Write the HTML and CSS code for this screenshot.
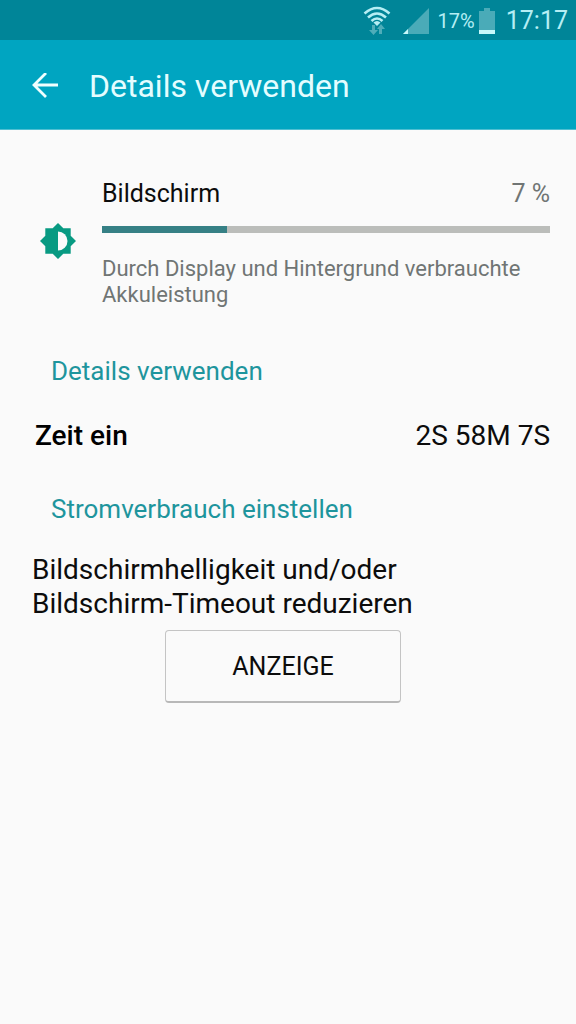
FILE: index.html
```html
<!DOCTYPE html>
<html lang="de">
<head>
  <meta charset="UTF-8" />
  <meta name="viewport" content="width=device-width, initial-scale=1.0" />
  <title>Details verwenden</title>
  <link rel="stylesheet" href="styles.css">
</head>
<body>
  <div class="status-bar">
    <svg class="wifi-icon" width="28" height="30" viewBox="0 0 28 30" aria-hidden="true">
      <g fill="none" stroke="#b5eef4" stroke-width="2.6">
        <path d="M1.5 7.5 Q14 -3.5 26.5 7.5" />
        <path d="M5 11.5 Q14 3.5 23 11.5" />
        <path d="M8.5 15 Q14 10 19.5 15" />
      </g>
      <path d="M10.5 16.5 Q14 13.5 17.5 16.5 L14 20 Z" fill="#b5eef4" />
      <path d="M9 19 h3 v5 h3 l-4.5 5 -4.500 -5 h3 Z M16 28 v-5 h-2 l4 -5 4 5 h-3 v5 Z" fill="#4fadb9" />
    </svg>
    <svg class="signal-icon" width="26" height="26" viewBox="0 0 26 26" aria-hidden="true">
      <path d="M26 0 V26 H0 Z" fill="#4aabb8" />
      <path d="M5 21 V26 H0 Z" fill="#c8f8fa" />
    </svg>
    <span class="battery-text">17%</span>
    <svg class="battery-icon" width="16" height="26" viewBox="0 0 16 26" aria-hidden="true">
      <path d="M5 0 H11 V3 H16 V26 H0 V3 H5 Z" fill="#4aabb8" />
      <path d="M0 22 H16 V26 H0 Z" fill="#c8f8fa" />
    </svg>
    <time class="clock">17:17</time>
  </div>

  <header>
    <button class="back-btn" type="button" aria-label="Zurück">
      <svg width="26" height="26" viewBox="0 0 26 26" aria-hidden="true">
        <path d="M26 12 H2 M14 0 L2 12 L14 24" fill="none" stroke="#f0ffff" stroke-width="2.8" />
      </svg>
    </button>
    <h1>Details verwenden</h1>
  </header>

  <main>
    <section class="usage">
      <svg class="usage-icon" width="36" height="36" viewBox="0 0 36 36" aria-hidden="true">
        <path d="M18 0 L23.300 5.300 H30.700 V12.700 L36 18 L30.700 23.300 V30.700 H23.300 L18 36 L12.700 30.700 H5.300 V23.300 L0 18 L5.300 12.700 V5.300 H12.700 Z" fill="#089a82" />
        <path d="M18 8.500 A9.500 9.500 0 0 1 18 27.500 Z" fill="#fafafa" />
      </svg>
      <div class="usage-body">
        <div class="usage-head">
          <span id="usageName">Bildschirm</span>
          <span class="percent">7 %</span>
        </div>
        <div class="bar" role="img" aria-labelledby="usageName">
          <div class="bar-fill" style="width: 28%"></div>
        </div>
        <p class="usage-text">Durch Display und Hintergrund verbrauchte Akkuleistung</p>
      </div>
    </section>

    <h2>Details verwenden</h2>
    <dl class="detail-row">
      <dt>Zeit ein</dt>
      <dd>2S 58M 7S</dd>
    </dl>

    <h2>Stromverbrauch einstellen</h2>
    <section class="adjust">
      <p>Bildschirmhelligkeit und/oder Bildschirm-Timeout reduzieren</p>
      <button class="display-btn" type="button">ANZEIGE</button>
    </section>
  </main>
</body>
</html>
```

FILE: styles.css
```css
/* Global Reset & Base Styles */
* { box-sizing: border-box; margin: 0; padding: 0; }
body {
  font-family: Roboto, "Liberation Sans", sans-serif;
  background: #fafafa;
  color: #0c0c0c;
  font-size: 25px;
  line-height: 32px;
}
button {
  font: inherit;
  color: inherit;
}
svg {
  display: block;
  flex: none;
}
/* Status bar */
.status-bar {
  display: flex;
  align-items: center;
  justify-content: flex-end;
  height: 40px;
  padding: 2px 8px 0;
  background: #008598;
  color: #b5eef4;
}
.wifi-icon {
  margin-right: 12px;
}
.signal-icon {
  margin-right: 9px;
}
.battery-text {
  font-size: 20px;
}
.battery-icon {
  margin: 0 11px 0 4px;
}
/* App bar */
header {
  display: flex;
  align-items: center;
  height: 90px;
  padding: 2px 32px 0;
  background: #00a5c1;
  border-bottom: 1px solid #4fbfd2;
}
.back-btn {
  margin-right: 31px;
  border: none;
  background: none;
  cursor: pointer;
}
header h1 {
  font-size: 32px;
  font-weight: normal;
  line-height: 40px;
  color: #e4fdff;
}
/* Usage summary */
.usage {
  display: flex;
  align-items: flex-start;
  gap: 26px;
  padding: 48px 26px 0 40px;
}
.usage-icon {
  margin-top: 45px;
}
.usage-body {
  flex: 1;
}
.usage-head {
  display: flex;
  justify-content: space-between;
}
.percent {
  color: #707574;
}
.bar {
  height: 7px;
  margin: 16px 0 23px;
  background: #bbbdba;
}
.bar-fill {
  height: 100%;
  background: #368085;
}
.usage-text {
  font-size: 22px;
  line-height: 26px;
  color: #707574;
}
/* Section headings */
h2 {
  padding: 0 51px;
  font-size: 26px;
  font-weight: normal;
  color: #1e959d;
}
.usage + h2 {
  margin-top: 47px;
}
.detail-row {
  display: flex;
  justify-content: space-between;
  margin: 33px 0 41px;
  padding: 0 26px 0 35px;
  font-size: 28px;
}
.detail-row dt {
  font-weight: 500;
  color: #000;
}
/* Power settings */
.adjust {
  margin-top: 28px;
  padding: 0 42px 0 32px;
  font-size: 28px;
  line-height: 34px;
}
.display-btn {
  display: block;
  width: 236px;
  height: 73px;
  margin: 9px auto 0;
  padding-top: 2px;
  border: 1px solid #c4c4c4;
  border-bottom: 2px solid #b8b8b8;
  border-radius: 4px;
  background: #fafafa;
  font-size: 25px;
  cursor: pointer;
}
```
